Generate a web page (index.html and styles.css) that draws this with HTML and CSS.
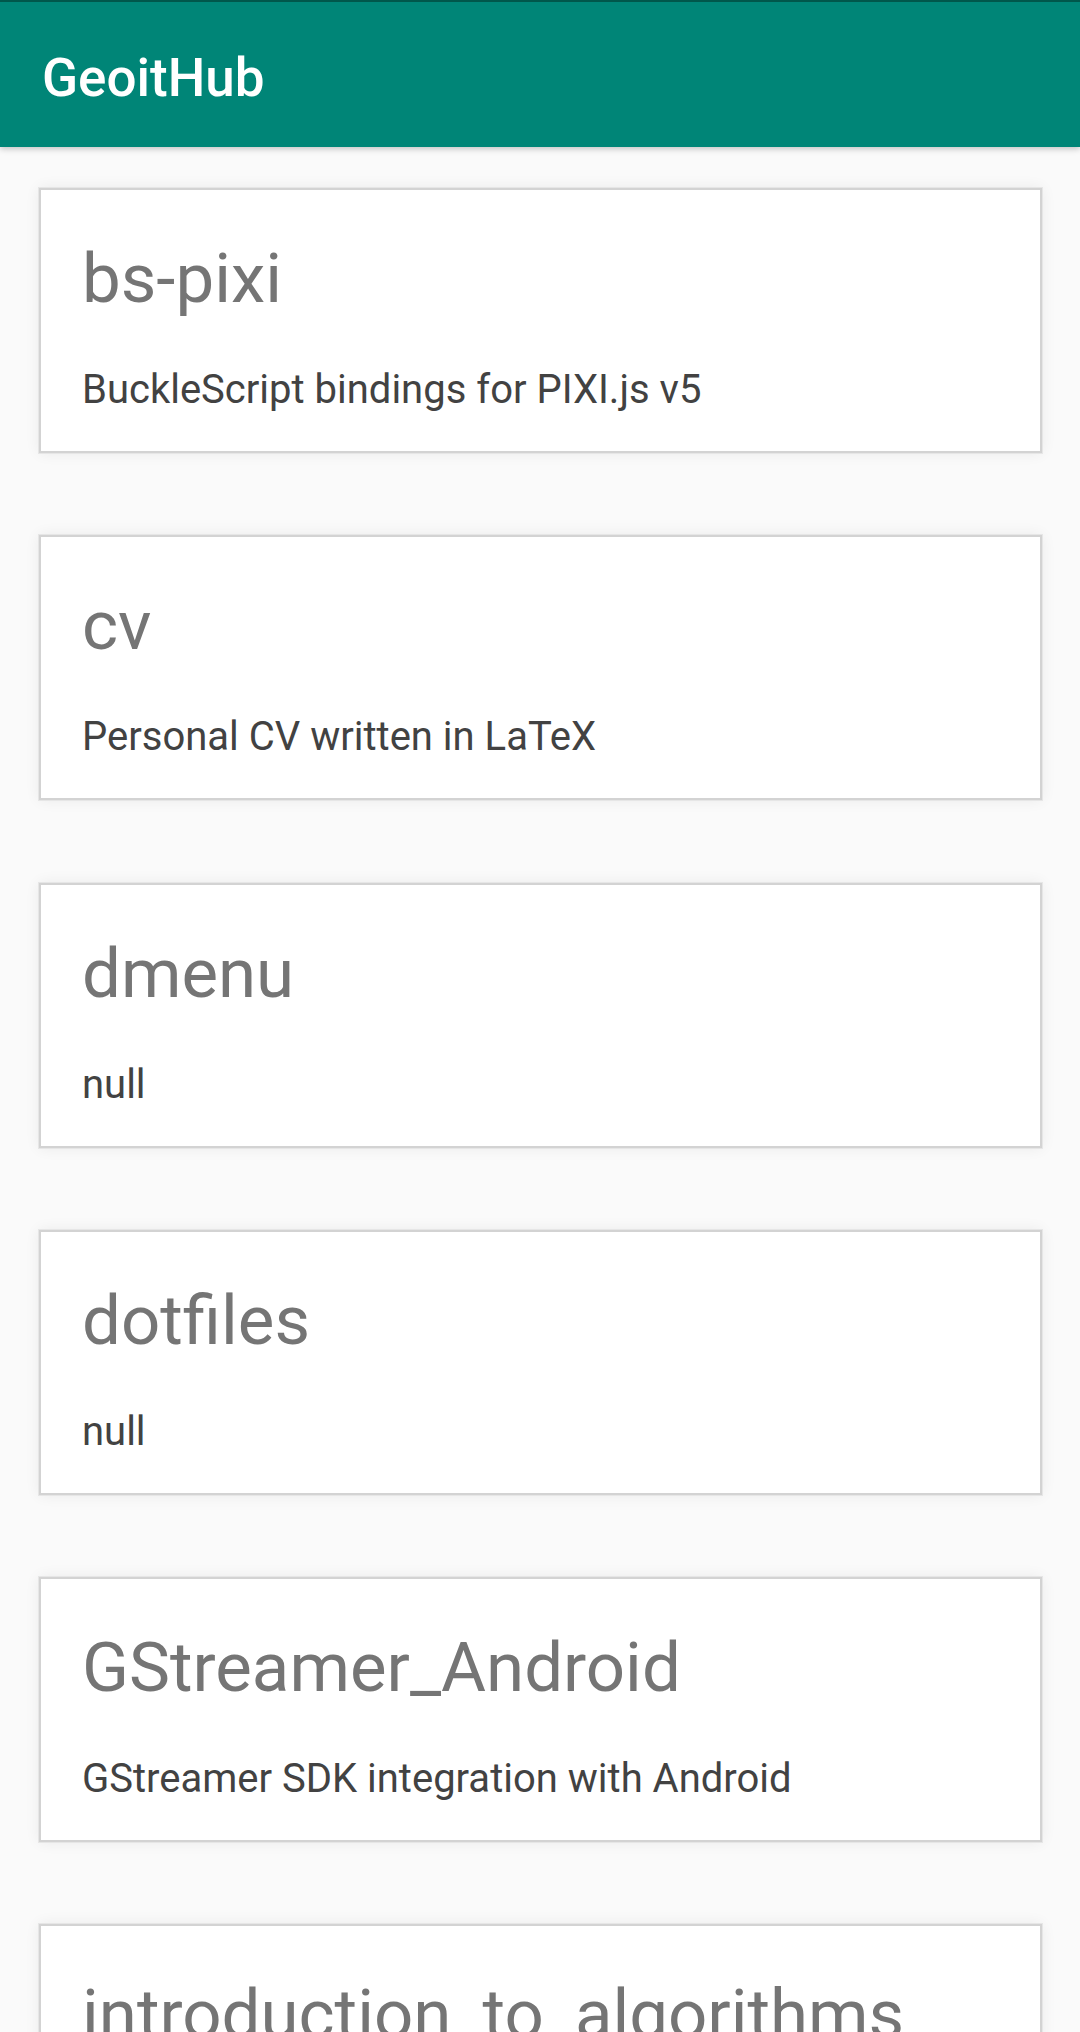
FILE: index.html
```html
<!DOCTYPE html>
<html lang="en">
<head>
<meta charset="utf-8">
<title>GeoitHub</title>
<link rel="stylesheet" href="styles.css">
</head>
<body>
<header class="appbar">
  <h1 class="appbar-title">GeoitHub</h1>
</header>
<main class="repo-list">
  <article class="card">
    <h2 class="card-title">bs-pixi</h2>
    <p class="card-desc">BuckleScript bindings for PIXI.js v5</p>
  </article>
  <article class="card">
    <h2 class="card-title">cv</h2>
    <p class="card-desc">Personal CV written in LaTeX</p>
  </article>
  <article class="card">
    <h2 class="card-title">dmenu</h2>
    <p class="card-desc">null</p>
  </article>
  <article class="card">
    <h2 class="card-title">dotfiles</h2>
    <p class="card-desc">null</p>
  </article>
  <article class="card">
    <h2 class="card-title">GStreamer_Android</h2>
    <p class="card-desc">GStreamer SDK integration with Android</p>
  </article>
  <article class="card">
    <h2 class="card-title">introduction_to_algorithms</h2>
    <p class="card-desc">null</p>
  </article>
</main>
</body>
</html>
```

FILE: styles.css
```css
html, body {
  margin: 0;
  padding: 0;
  height: 2032px;
  overflow: hidden;
}

body {
  background: #fafafa;
  font-family: Roboto, "Noto Sans", "Liberation Sans", sans-serif;
}

.appbar {
  position: relative;
  z-index: 2;
  box-sizing: border-box;
  height: 147px;
  background: #008577;
  border-top: 2px solid #00574b;
  box-shadow: 0 2px 6px rgba(0, 0, 0, 0.22);
}

.appbar-title {
  margin: 0;
  padding: 45px 0 0 42px;
  font-size: 53px;
  line-height: 62px;
  font-weight: 500;
  color: #ffffff;
}

.repo-list {
  display: flex;
  flex-direction: column;
  gap: 82.3px;
  padding: 41px 38px 0 39px;
}

.card {
  box-sizing: border-box;
  flex: 0 0 auto;
  height: 265px;
  background: #ffffff;
  border: 2px solid #d3d3d3;
  box-shadow: 0 0 0 1px #e6e6e6, 0 0 14px rgba(0, 0, 0, 0.07);
  padding: 47px 37px 0 41px;
}

.card-title {
  margin: 0;
  font-size: 69px;
  line-height: 84px;
  font-weight: 400;
  color: #757575;
  white-space: nowrap;
}

.card-desc {
  margin: 46px 0 0 0;
  font-size: 40px;
  line-height: 46px;
  font-weight: 400;
  color: #424242;
  white-space: nowrap;
}
```
